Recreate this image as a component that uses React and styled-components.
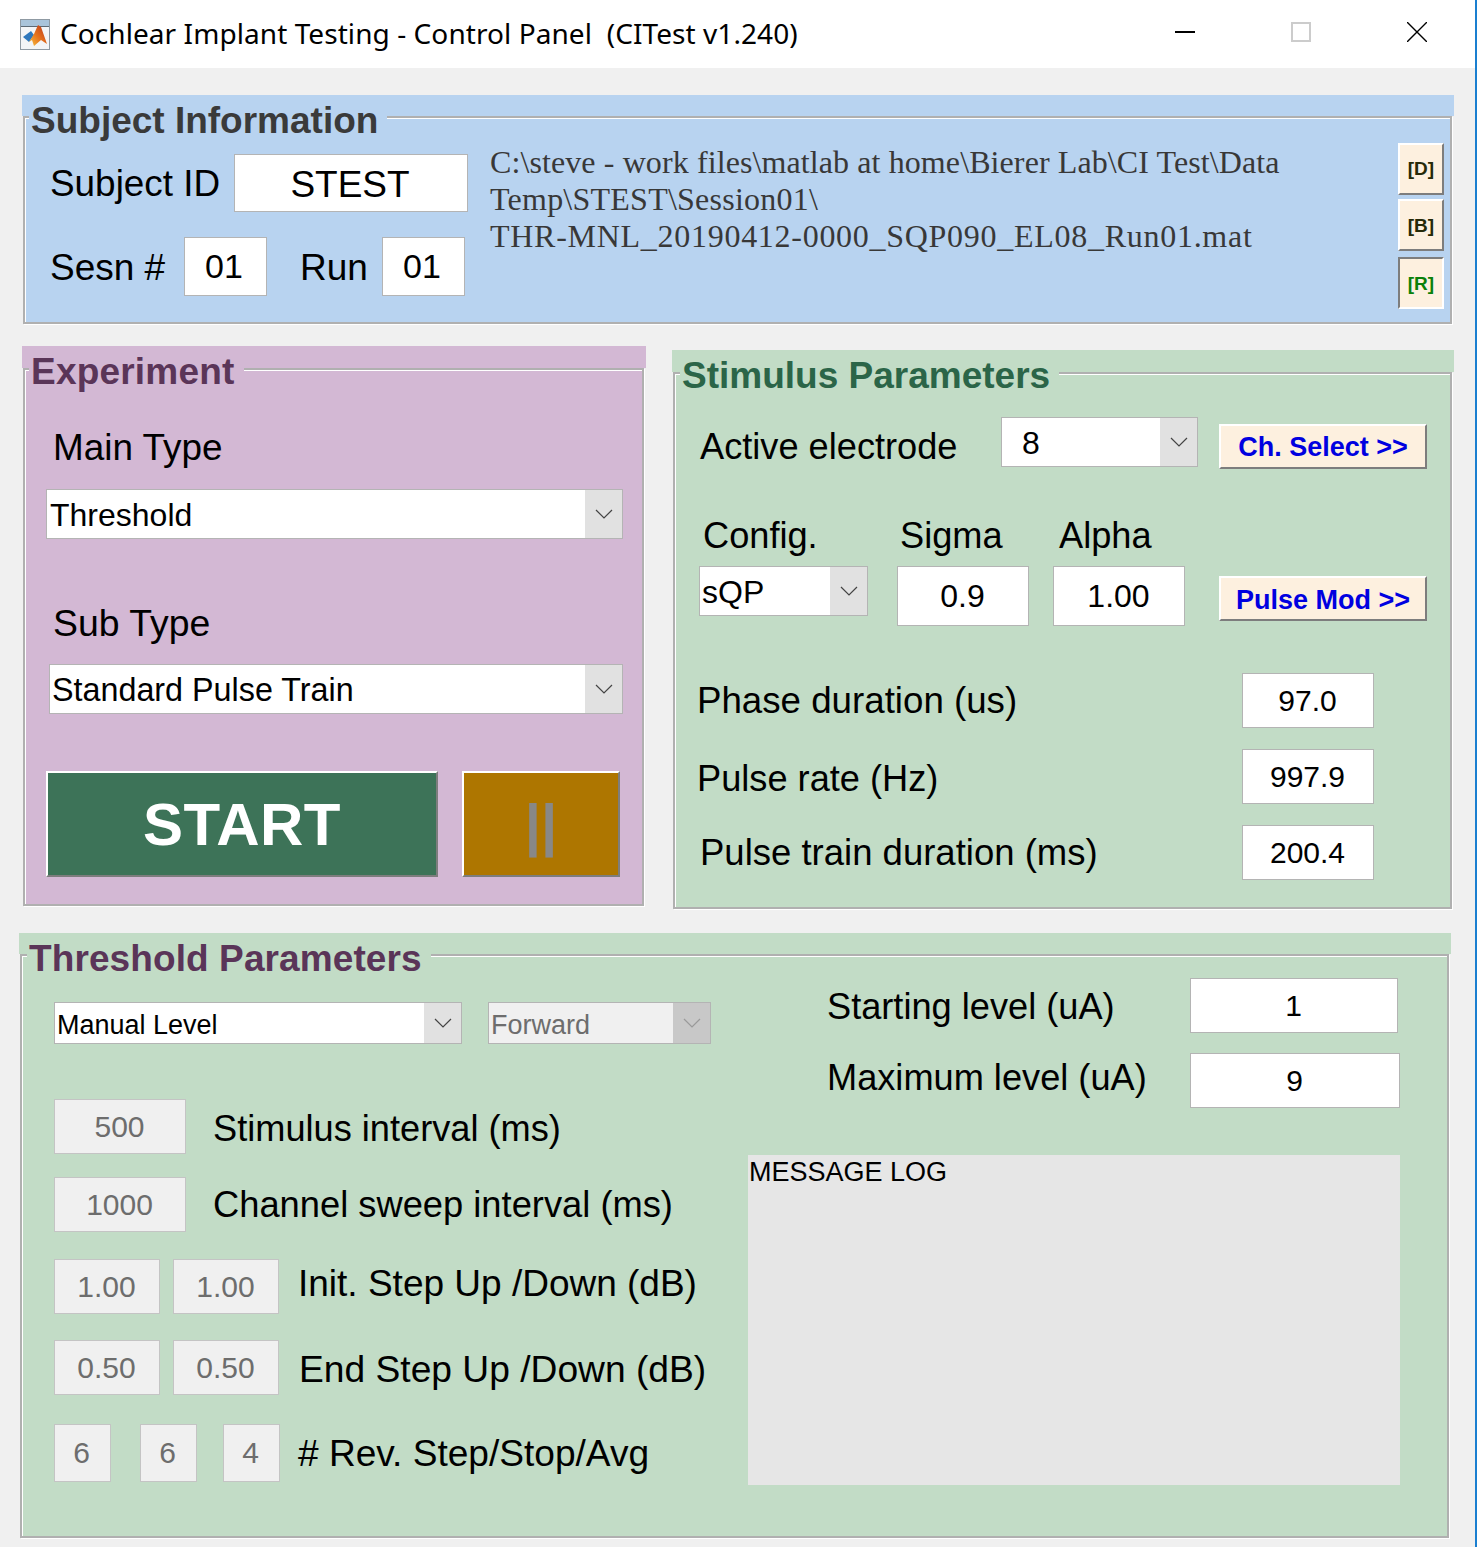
import React from 'react';
import styled, { createGlobalStyle } from 'styled-components';

const GlobalStyle = createGlobalStyle`
  html, body {
    margin: 0;
    padding: 0;
    background: #f0f0f0;
  }
  * {
    box-sizing: border-box;
  }
`;

const BLUE = '#b8d3f0';
const PURPLE = '#d3b8d4';
const GREEN = '#c2dcc6';

const Window = styled.div`
  width: 1477px;
  height: 1547px;
  overflow: hidden;
  background: #f0f0f0;
  border-right: 2px solid #1a7fd0;
  font-family: 'Liberation Sans', Arial, sans-serif;
  color: #000;
`;

const TitleBar = styled.div`
  display: flex;
  align-items: center;
  height: 68px;
  background: #fff;
  padding-left: 20px;
`;

const TitleText = styled.div`
  margin-left: 10px;
  padding-bottom: 2px;
  font-family: 'Noto Sans', sans-serif;
  font-size: 28px;
  letter-spacing: 0.07px;
  white-space: pre;
  color: #000;
`;

const WindowControls = styled.div`
  display: flex;
  margin-left: auto;
`;

const ControlCell = styled.div`
  width: 116px;
  height: 64px;
  padding-bottom: 4px;
  display: flex;
  align-items: center;
  justify-content: center;
`;

const Panel = styled.section`
  width: ${(p) => p.$w}px;
  margin-left: ${(p) => p.$ml}px;
  margin-top: ${(p) => p.$mt}px;
  flex: none;
`;

const Band = styled.div`
  height: ${(p) => p.$h}px;
  background: ${(p) => p.$bg};
`;

const Frame = styled.div`
  position: relative;
  height: ${(p) => p.$h}px;
  margin-left: 1px;
  margin-right: 2px;
  background: ${(p) => p.$bg};
  border: 2px solid #b0b0b0;
  box-shadow: inset 1px 1px 0 #fff, 1px 1px 0 #fff;
`;

const PanelTitle = styled.div`
  position: absolute;
  left: ${(p) => p.$left}px;
  top: ${(p) => p.$top}px;
  padding: 0 9px 0 2px;
  font-size: 37px;
  font-weight: 700;
  line-height: 44px;
  letter-spacing: ${(p) => p.$ls || 0}px;
  white-space: nowrap;
  color: ${(p) => p.$color};
  background: ${(p) => p.$bg};
`;

const Middle = styled.div`
  display: flex;
  align-items: flex-start;
  margin-top: 22px;
`;

const Row = styled.div`
  display: flex;
  align-items: ${(p) => p.$align || 'center'};
  margin-top: ${(p) => p.$mt || 0}px;
  padding-left: ${(p) => p.$pl || 0}px;
  gap: ${(p) => p.$gap || 0}px;
`;

const Label = styled.div`
  flex: none;
  height: 44px;
  padding-top: 1px;
  width: ${(p) => (p.$w ? `${p.$w}px` : 'auto')};
  margin-left: ${(p) => p.$ml || 0}px;
  margin-top: ${(p) => p.$mt || 0}px;
  margin-bottom: ${(p) => p.$mb || 0}px;
  font-size: ${(p) => p.$fs || 36.2}px;
  line-height: 44px;
  white-space: nowrap;
`;

const Field = styled.div`
  flex: none;
  display: flex;
  align-items: center;
  justify-content: center;
  width: ${(p) => p.$w}px;
  height: ${(p) => p.$h}px;
  margin-left: ${(p) => p.$ml || 0}px;
  padding-right: ${(p) => p.$pr ?? 1}px;
  padding-top: ${(p) => p.$pt || 0}px;
  font-size: ${(p) => p.$fs || 30}px;
  background: ${(p) => (p.$off ? '#f0f0f0' : '#fff')};
  color: ${(p) => (p.$off ? '#6d6d6d' : '#000')};
  border: 1px solid ${(p) => (p.$off ? '#c4c4c4' : '#b4b4b4')};
`;

const SelectBox = styled.div`
  flex: none;
  display: flex;
  width: ${(p) => p.$w}px;
  height: ${(p) => p.$h}px;
  margin-left: ${(p) => p.$ml || 0}px;
  background: ${(p) => (p.$off ? '#f0f0f0' : '#fff')};
  border: 1px solid #b4b4b4;
`;

const SelectValue = styled.div`
  flex: 1;
  display: flex;
  align-items: center;
  padding-left: ${(p) => p.$pl}px;
  padding-top: ${(p) => p.$pt}px;
  font-size: ${(p) => p.$fs}px;
  color: ${(p) => (p.$off ? '#6d6d6d' : '#000')};
  white-space: nowrap;
`;

const SelectArrow = styled.div`
  flex: none;
  width: 37px;
  display: flex;
  align-items: center;
  justify-content: center;
  background: ${(p) => (p.$off ? '#c8c8c8' : '#e1e1e1')};
`;

const Raised = styled.button`
  flex: none;
  display: flex;
  align-items: center;
  justify-content: center;
  padding: ${(p) => p.$pt || 0}px 0 0;
  width: ${(p) => p.$w}px;
  height: ${(p) => p.$h}px;
  margin-left: ${(p) => p.$ml || 0}px;
  margin-top: ${(p) => p.$mt || 0}px;
  font-family: 'Liberation Sans', Arial, sans-serif;
  font-weight: 700;
  font-size: ${(p) => p.$fs}px;
  letter-spacing: ${(p) => p.$ls || 0}px;
  color: ${(p) => p.$color};
  background: ${(p) => p.$bg};
  border-style: solid;
  border-width: 2px;
  border-color: ${(p) =>
    p.$pressed ? '#7d7d7d #fff #fff #7d7d7d' : '#fff #7d7d7d #7d7d7d #fff'};
`;

const SubjectBody = styled.div`
  display: flex;
  height: 100%;
`;

const SubjectLeft = styled.div`
  flex: none;
  width: 443px;
  padding-left: 25px;
`;

const PathText = styled.div`
  flex: 1;
  margin: 26px 0 0 22px;
  font-family: 'Liberation Serif', 'Times New Roman', serif;
  font-size: 32px;
  line-height: 37px;
  white-space: nowrap;
  color: #383838;
`;

const PathLine = styled.div`
  letter-spacing: ${(p) => p.$ls}px;
`;

const SideButtons = styled.div`
  flex: none;
  width: 46px;
  margin: 25px 6px 0 0;
  display: flex;
  flex-direction: column;
`;

const ThresholdBody = styled.div`
  display: grid;
  grid-template-columns: 726px 1fr;
`;

const LogBox = styled.div`
  width: 652px;
  height: 330px;
  margin-top: 47px;
  padding-left: 1px;
  background: #e6e6e6;
  font-size: 27px;
  line-height: 34px;
`;

const Chevron = ({ off }) => (
  <svg width="18" height="10" viewBox="0 0 18 10" fill="none">
    <path d="M1 1 L9 9 L17 1" stroke={off ? '#9a9a9a' : '#444'} strokeWidth="1.2" />
  </svg>
);

const Select = ({ w, h, ml, value, fs, pl, pt = 2, off }) => (
  <SelectBox $w={w} $h={h} $ml={ml} $off={off}>
    <SelectValue $fs={fs} $pl={pl} $pt={pt} $off={off}>{value}</SelectValue>
    <SelectArrow $off={off}><Chevron off={off} /></SelectArrow>
  </SelectBox>
);

const MatlabIcon = () => (
  <svg width="30" height="31" viewBox="0 0 30 31">
    <defs>
      <linearGradient id="peak" x1="1" y1="0" x2="0" y2="1">
        <stop offset="0" stopColor="#b8321a" />
        <stop offset="0.55" stopColor="#e8761e" />
        <stop offset="1" stopColor="#f5c242" />
      </linearGradient>
    </defs>
    <rect x="0.5" y="0.5" width="29" height="30" fill="#f3f5f7" stroke="#8f9aa3" />
    <rect x="1" y="1" width="28" height="6" fill="#a9c4da" />
    <rect x="1" y="7" width="28" height="1" fill="#5d6b76" />
    <path d="M3 18 L11 12 L14 16 L9 23 Z" fill="#2f78bd" />
    <path d="M9 23 L14 15 L18 6 L21 8 L27 25 L21 21 L14 27 L12 21 Z" fill="url(#peak)" />
  </svg>
);

const App = () => (
  <>
    <GlobalStyle />
    <Window>
      <TitleBar>
        <MatlabIcon />
        <TitleText>{'Cochlear Implant Testing - Control Panel  (CITest v1.240)'}</TitleText>
        <WindowControls>
          <ControlCell>
            <svg width="20" height="2"><rect width="20" height="2" fill="#000" /></svg>
          </ControlCell>
          <ControlCell>
            <svg width="20" height="20"><rect x="1" y="1" width="18" height="18" fill="none" stroke="#ccc" strokeWidth="2" /></svg>
          </ControlCell>
          <ControlCell>
            <svg width="20" height="20"><path d="M0 0 L20 20 M20 0 L0 20" stroke="#000" strokeWidth="1.4" /></svg>
          </ControlCell>
        </WindowControls>
      </TitleBar>

      <Panel $w={1432} $ml={22} $mt={27}>
        <Band $h={21} $bg={BLUE} />
        <Frame $h={208} $bg={BLUE}>
          <PanelTitle $top={-19} $left={4} $color="#3a3a3a" $bg={BLUE}>Subject Information</PanelTitle>
          <SubjectBody>
            <SubjectLeft>
              <Row $mt={36}>
                <Label $w={184} $fs={36.9}>Subject ID</Label>
                <Field $w={234} $h={58} $fs={37} $pt={4} $pr={2}>STEST</Field>
              </Row>
              <Row $mt={25}>
                <Label $w={134} $fs={37}>Sesn #</Label>
                <Field $w={83} $h={59} $fs={34} $pr={3}>01</Field>
                <Label $ml={33} $w={82} $fs={37}>Run</Label>
                <Field $w={83} $h={59} $fs={34} $pr={3}>01</Field>
              </Row>
            </SubjectLeft>
            <PathText>
              <PathLine $ls={0.1}>C:\steve - work files\matlab at home\Bierer Lab\CI Test\Data</PathLine>
              <PathLine $ls={0.24}>Temp\STEST\Session01\</PathLine>
              <PathLine $ls={0.72}>THR-MNL_20190412-0000_SQP090_EL08_Run01.mat</PathLine>
            </PathText>
            <SideButtons>
              <Raised $w={46} $h={52} $fs={19} $color="#262a08" $bg="#fdf0df">[D]</Raised>
              <Raised $w={46} $h={52} $mt={4} $pt={2} $fs={19} $color="#262a08" $bg="#fdf0df">[B]</Raised>
              <Raised $w={46} $h={52} $mt={6} $pt={2} $fs={19} $color="#0a800a" $bg="#fdf0df" $pressed>[R]</Raised>
            </SideButtons>
          </SubjectBody>
        </Frame>
      </Panel>

      <Middle>
        <Panel $w={624} $ml={22} $mt={0}>
          <Band $h={22} $bg={PURPLE} />
          <Frame $h={538} $bg={PURPLE}>
            <PanelTitle $top={-20} $left={4} $ls={0.2} $color="#5a3558" $bg={PURPLE}>Experiment</PanelTitle>
            <Row $mt={55} $pl={28}><Label $fs={36.9}>Main Type</Label></Row>
            <Row $mt={20} $pl={21}>
              <Select w={577} h={50} value="Threshold" fs={32} pl={3} />
            </Row>
            <Row $mt={61} $pl={28}><Label $fs={37.4} $mb={2}>Sub Type</Label></Row>
            <Row $mt={18} $pl={24}>
              <Select w={574} h={50} value="Standard Pulse Train" fs={32.3} pl={2} />
            </Row>
            <Row $mt={57} $pl={21} $gap={24}>
              <Raised $w={392} $h={106} $fs={60} $ls={0.5} $color="#fff" $bg="#3d7358">START</Raised>
              <Raised $w={158} $h={106} $fs={58} $color="#888" $bg="#ae7600">||</Raised>
            </Row>
          </Frame>
        </Panel>

        <Panel $w={782} $ml={26} $mt={4}>
          <Band $h={22} $bg={GREEN} />
          <Frame $h={537} $bg={GREEN}>
            <PanelTitle $top={-20} $left={5} $color="#2b6548" $bg={GREEN}>Stimulus Parameters</PanelTitle>
            <Row $mt={43} $align="flex-start">
              <Label $ml={25} $w={301} $mt={7}>Active electrode</Label>
              <Select w={197} h={50} value="8" fs={32} pl={20} />
              <Raised $w={208} $h={45} $ml={21} $mt={7} $pt={2} $fs={27} $color="#0000e0" $bg="#fdf0df">{'Ch. Select >>'}</Raised>
            </Row>
            <Row $mt={44}>
              <Label $ml={28} $w={197}>Config.</Label>
              <Label $w={159}>Sigma</Label>
              <Label>Alpha</Label>
            </Row>
            <Row $mt={9} $align="flex-start">
              <Select w={169} h={50} ml={24} value="sQP" fs={32} pl={2} />
              <Field $w={132} $h={60} $ml={29} $fs={32}>0.9</Field>
              <Field $w={132} $h={60} $ml={24} $fs={32}>1.00</Field>
              <Raised $w={208} $h={45} $ml={34} $mt={10} $pt={4} $fs={27} $color="#0000e0" $bg="#fdf0df">{'Pulse Mod >>'}</Raised>
            </Row>
            <Row $mt={47}>
              <Label $ml={22} $w={545} $fs={36.7} $mb={2}>Phase duration (us)</Label>
              <Field $w={132} $h={55}>97.0</Field>
            </Row>
            <Row $mt={21}>
              <Label $ml={22} $w={545} $mt={2}>Pulse rate (Hz)</Label>
              <Field $w={132} $h={55}>997.9</Field>
            </Row>
            <Row $mt={21}>
              <Label $ml={25} $w={542} $fs={36.5} $mb={2}>Pulse train duration (ms)</Label>
              <Field $w={132} $h={55}>200.4</Field>
            </Row>
          </Frame>
        </Panel>
      </Middle>

      <Panel $w={1432} $ml={19} $mt={24}>
        <Band $h={21} $bg={GREEN} />
        <Frame $h={584} $bg={GREEN}>
          <PanelTitle $top={-19} $left={5} $ls={0.1} $color="#5a3558" $bg={GREEN}>Threshold Parameters</PanelTitle>
          <ThresholdBody>
            <div>
              <Row $mt={46} $pl={32} $gap={26}>
                <Select w={408} h={42} value="Manual Level" fs={27} pl={2} pt={4} />
                <Select w={223} h={42} value="Forward" fs={27} pl={2} pt={4} off />
              </Row>
              <Row $mt={55} $pl={32}>
                <Field $w={132} $h={55} $off>500</Field>
                <Label $ml={27} $mt={2}>Stimulus interval (ms)</Label>
              </Row>
              <Row $mt={23} $pl={32}>
                <Field $w={132} $h={55} $off>1000</Field>
                <Label $ml={27} $mb={2} $fs={36.3}>Channel sweep interval (ms)</Label>
              </Row>
              <Row $mt={27} $pl={32}>
                <Field $w={106} $h={55} $off>1.00</Field>
                <Field $w={106} $h={55} $ml={13} $off>1.00</Field>
                <Label $ml={19} $mb={8} $fs={37}>Init. Step Up /Down (dB)</Label>
              </Row>
              <Row $mt={26} $pl={32}>
                <Field $w={106} $h={55} $off>0.50</Field>
                <Field $w={106} $h={55} $ml={13} $off>0.50</Field>
                <Label $ml={20} $fs={37.2}>End Step Up /Down (dB)</Label>
              </Row>
              <Row $mt={29} $pl={32}>
                <Field $w={57} $h={58} $off $pr={2}>6</Field>
                <Field $w={57} $h={58} $ml={29} $off $pr={2}>6</Field>
                <Field $w={57} $h={58} $ml={26} $off $pr={2}>4</Field>
                <Label $ml={18} $mb={3} $fs={37.1}># Rev. Step/Stop/Avg</Label>
              </Row>
            </div>
            <div>
              <Row $mt={22}>
                <Label $ml={79} $w={363}>Starting level (uA)</Label>
                <Field $w={208} $h={55}>1</Field>
              </Row>
              <Row $mt={20}>
                <Label $ml={79} $w={363} $mb={8}>Maximum level (uA)</Label>
                <Field $w={210} $h={55}>9</Field>
              </Row>
              <LogBox>MESSAGE LOG</LogBox>
            </div>
          </ThresholdBody>
        </Frame>
      </Panel>
    </Window>
  </>
);

export default App;
